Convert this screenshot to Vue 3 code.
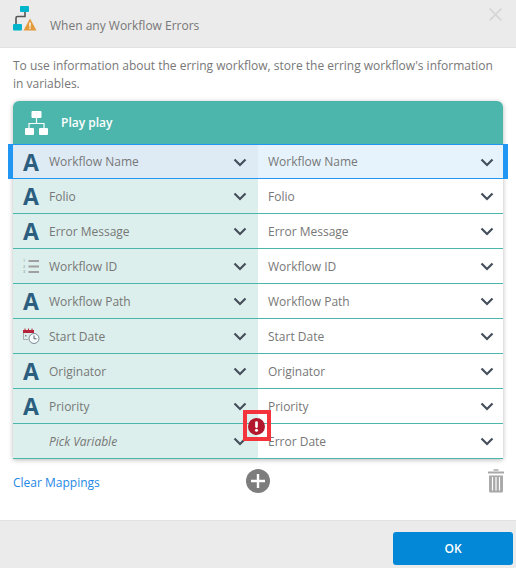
<template>
  <div class="dialog">
    <!-- Header -->
    <header class="dlg-header">
      <svg class="hd-icon" width="38" height="32" viewBox="0 0 38 32">
        <rect x="20" y="6" width="9" height="6" rx="1" fill="#00b4cc" />
        <path d="M25 12v4.500h-7.500a1.500 1.500 0 0 0-1.500 1.500v6" fill="none" stroke="#555" stroke-width="1.600" />
        <rect x="13" y="24" width="9" height="6.500" rx="1" fill="#00b4cc" />
        <path d="M30 18.500l6.500 12h-13z" fill="#e39a3b" />
        <rect x="29.300" y="22.500" width="1.400" height="4.200" fill="#fff" />
        <rect x="29.300" y="27.500" width="1.400" height="1.400" fill="#fff" />
      </svg>
      <span class="hd-title">When any Workflow Errors</span>
      <svg class="close" width="13" height="13" viewBox="0 0 13 13">
        <path d="M.7 .7l11.600 11.600M12.300 .7L.7 12.300" stroke="#d6d6d6" stroke-width="1.800" />
      </svg>
    </header>

    <div class="body">
      <p class="desc">To use information about the erring workflow, store the erring workflow's information in variables.</p>

      <div class="card">
        <div class="card-head">
          <svg width="23" height="24" viewBox="0 0 23 24">
            <rect x="6.500" y="0" width="10" height="7" rx="1" fill="#fff" />
            <path d="M11.500 7v5M4 18v-5.500h15V18" fill="none" stroke="#fff" stroke-width="1.200" />
            <rect x="0" y="17" width="9" height="7" rx="1" fill="#fff" />
            <rect x="14" y="17" width="9" height="7" rx="1" fill="#fff" />
          </svg>
          <span>Play play</span>
        </div>

        <div v-for="row in rows" :key="row.target" class="row" :class="{ selected: row.selected }">
          <div class="cell left">
            <span class="type">
              <span v-if="row.type === 'text'" class="type-a">A</span>
              <svg v-else-if="row.type === 'num'" width="16" height="20" viewBox="0 -2 16 20">
                <text x="0" y="4" class="mini">1</text>
                <text x="0" y="9.500" class="mini">2</text>
                <text x="0" y="15" class="mini">3</text>
                <path d="M5.500 3H16M5.500 8.500H16M5.500 14H16" stroke="#a0a0a0" stroke-width="2" />
              </svg>
              <svg v-else-if="row.type === 'date'" width="17" height="16" viewBox="0 0 17 16">
                <path d="M0 2h11v3H0z" fill="#b5243a" />
                <path d="M2 .5v2M5.500 .5v2M9 .5v2" stroke="#b5243a" stroke-width="1" />
                <path d="M.5 5v6.500H5" fill="none" stroke="#aaa" />
                <rect x="2" y="7" width="1.500" height="1.500" fill="#888" />
                <circle cx="11" cy="10.500" r="5" fill="#f5fafa" stroke="#7c8a96" stroke-width="1" />
                <path d="M11 7.500v3.300h2.500" fill="none" stroke="#54636f" stroke-width="1" />
              </svg>
            </span>
            <span class="label" :class="{ pick: row.pick }">{{ row.source }}</span>
            <svg class="chev" width="14" height="9" viewBox="0 0 14 9">
              <path d="M1.500 1.500L7 7l5.500-5.500" fill="none" stroke="#454f5b" stroke-width="2.200" />
            </svg>
          </div>
          <div class="cell right">
            <span class="label">{{ row.target }}</span>
            <svg class="chev" width="14" height="9" viewBox="0 0 14 9">
              <path d="M1.500 1.500L7 7l5.500-5.500" fill="none" stroke="#454f5b" stroke-width="2.200" />
            </svg>
          </div>
        </div>

        <!-- validation marker -->
        <div class="err-box">
          <svg width="17" height="17" viewBox="0 0 18 18">
            <circle cx="9" cy="9" r="9" fill="#b3172d" />
            <rect x="7.600" y="3.500" width="2.800" height="7" rx="1.200" fill="#fff" />
            <circle cx="9" cy="13" r="1.600" fill="#fff" />
          </svg>
        </div>
      </div>

      <div class="actions">
        <a class="clear">Clear Mappings</a>
        <svg class="add" width="24" height="24" viewBox="0 0 24 24">
          <circle cx="12" cy="12" r="12" fill="#7d7d7d" />
          <path d="M12 5v14M5 12h14" stroke="#fff" stroke-width="2.400" />
        </svg>
        <svg class="trash" width="16" height="24" viewBox="0 0 16 24">
          <path d="M5.500 1h5" stroke="#a8a8a8" stroke-width="1.500" />
          <path d="M0 3.500h16" stroke="#a8a8a8" stroke-width="2" />
          <path d="M1 6.500h14V22a1.500 1.500 0 0 1-1.500 1.500h-11A1.500 1.500 0 0 1 1 22z" fill="#a8a8a8" />
          <path d="M4.500 8v13.500M8 8v13.500M11.500 8v13.500" stroke="#fff" stroke-width="1.200" />
        </svg>
      </div>
    </div>

    <footer class="dlg-footer">
      <button class="ok">OK</button>
    </footer>
  </div>
</template>

<script setup>
const rows = [
  { type: 'text', source: 'Workflow Name', target: 'Workflow Name', selected: true },
  { type: 'text', source: 'Folio', target: 'Folio' },
  { type: 'text', source: 'Error Message', target: 'Error Message' },
  { type: 'num', source: 'Workflow ID', target: 'Workflow ID' },
  { type: 'text', source: 'Workflow Path', target: 'Workflow Path' },
  { type: 'date', source: 'Start Date', target: 'Start Date' },
  { type: 'text', source: 'Originator', target: 'Originator' },
  { type: 'text', source: 'Priority', target: 'Priority' },
  { type: 'none', source: 'Pick Variable', target: 'Error Date', pick: true },
]
</script>

<style>
html, body { margin: 0; background: #fff; }
</style>

<style scoped>
.dialog {
  width: 516px; height: 568px; overflow: hidden;
  display: flex; flex-direction: column;
  font-family: "Open Sans", "Liberation Sans", sans-serif;
  color: #777;
}

/* HEADER */
.dlg-header {
  height: 47px;
  background: #ebebeb; border-bottom: 1px solid #e2e2e2;
  display: flex; align-items: flex-start; position: relative;
}
.hd-icon { flex: none; }
.hd-title { margin-left: 12px; font-size: 12px; line-height: 18px; margin-top: 17px; color: #777; }
.close { position: absolute; right: 14px; top: 8px; }

/* BODY */
.body { flex: 1; padding: 9px 13px 0; position: relative; }
.desc {
  margin: 0 0 8px; font-size: 12px; line-height: 18px; color: #777;
}
.card {
  position: relative; border-radius: 6px 6px 0 0;
  box-shadow: 0 1px 5px rgba(0,0,0,0.28);
  width: 490px; background: #fff;
}
.card-head {
  height: 43px; background: #4db6ac; border-radius: 6px 6px 0 0;
  display: flex; align-items: center; gap: 13px; padding-left: 12px;
  color: #fff; font-weight: 600; font-size: 12px;
}

/* ROWS */
.row {
  display: flex; height: 35px; box-sizing: border-box;
  border-bottom: 1px solid #4db6ac; position: relative;
}
.row.selected {
  border-top: 1px solid #2196f3; border-bottom: 1px solid #2196f3;
}
.row.selected::before,
.row.selected::after {
  content: ""; position: absolute; top: -1px; bottom: -1px; width: 5px; background: #2196f3;
}
.row.selected::before { left: -5px; }
.row.selected::after { right: -5px; }
.cell {
  display: flex; align-items: center; position: relative; height: 100%;
}
.cell.left { width: 245px; background: #dcefec; }
.cell.right { width: 245px; padding-left: 10px; box-sizing: border-box; }
.row.selected .left { background: #deebf5; }
.row.selected .right { background: #e6f3fc; }
.type { width: 36px; display: flex; justify-content: center; flex: none; }
.type-a {
  font-weight: 700; font-size: 23px; line-height: 24px;
  color: #2c5e80;
}
.mini { font-size: 4px; fill: #888; font-family: "Open Sans", sans-serif; }
.label { font-size: 12px; color: #777; }
.label.pick { font-style: italic; }
.chev { position: absolute; right: 11px; top: 50%; margin-top: -4px; }
.right .chev { right: 9px; }

.err-box {
  position: absolute; left: 230px; top: 309px;
  width: 28px; height: 31px; box-sizing: border-box;
  border: 4px solid #f4333d;
  padding: 1px 1px 0 0;
  display: flex; align-items: center; justify-content: center;
}

/* ACTIONS */
.actions { position: relative; height: 46px; }
.clear {
  position: absolute; left: 0; top: 15px;
  font-size: 12px; line-height: 18px; color: #1e88e5;
}
.add { position: absolute; left: 233px; top: 10px; }
.trash { position: absolute; right: -1px; top: 10px; }

/* FOOTER */
.dlg-footer {
  height: 48px; background: #ebebeb; border-top: 1px solid #e2e2e2;
  display: flex; justify-content: flex-end; align-items: flex-start;
  padding: 11px 3px 0 0; box-sizing: border-box;
}
.ok {
  width: 120px; height: 33px; border: none; border-radius: 3px;
  background: #0288d6; color: #fff; font-family: inherit;
  font-size: 12px; font-weight: 600;
}
</style>
